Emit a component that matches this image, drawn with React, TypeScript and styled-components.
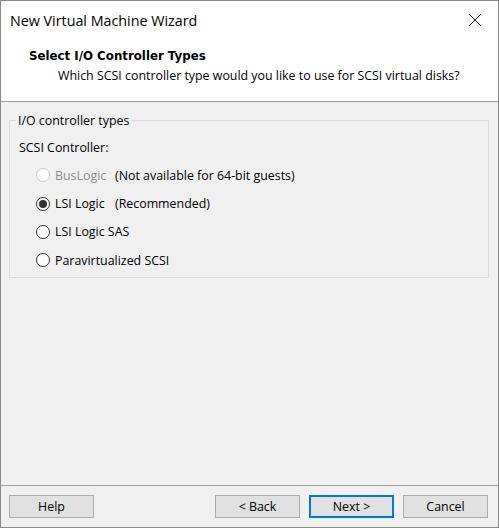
import React from "react";
import styled, { createGlobalStyle } from "styled-components";

const Global = createGlobalStyle`
  html, body { margin: 0; padding: 0; background: #f0f0f0; }
  body { font-family: "Open Sans", "Noto Sans", sans-serif; }
`;

const Window = styled.div`
  box-sizing: border-box;
  width: 499px;
  height: 528px;
  border: 1px solid #8a8a8a;
  background: #f0f0f0;
  display: flex;
  flex-direction: column;
  font-family: "Open Sans", "Noto Sans", sans-serif;
  font-size: 12.4px;
  color: #000;
`;

const Top = styled.div`
  background: #fff;
  border-bottom: 1px solid #a0a0a0;
  height: 101px;
  box-sizing: border-box;
  display: flex;
  flex-direction: column;
`;

const TitleBar = styled.div`
  height: 38px;
  display: flex;
  align-items: center;
  justify-content: space-between;
  padding-left: 9px;
`;

const TitleText = styled.div`
  font-size: 14.3px;
  color: #000;
`;

const CloseBtn = styled.div`
  width: 46px;
  height: 38px;
  display: flex;
  align-items: center;
  justify-content: center;
`;

const HeaderTitle = styled.div`
  font-family: "DejaVu Sans", sans-serif;
  font-weight: bold;
  font-size: 11.8px;
  padding-left: 28px;
  margin-top: 10px;
`;

const HeaderSub = styled.div`
  padding-left: 57px;
  margin-top: 4px;
`;

const Body = styled.div`
  flex: 1;
  padding: 10px 9px 0 8px;
  border-bottom: 1px solid #a0a0a0;
`;

const Group = styled.fieldset`
  margin: 0;
  border: 1px solid #dcdcdc;
  padding: 0 0 2px 0;
  box-sizing: border-box;
`;

const Legend = styled.legend`
  padding: 0 2px;
  margin-left: 6px;
`;

const GroupContent = styled.div`
  padding-left: 9px;
`;

const Label = styled.div`
  margin-top: 10px;
  margin-bottom: 5px;
`;

const RadioRow = styled.div<{ $disabled?: boolean }>`
  display: flex;
  align-items: center;
  height: 28.4px;
  padding-left: 17px;
  color: ${(p) => (p.$disabled ? "#8d8d8d" : "#000")};
`;

const Circle = styled.span<{ $checked?: boolean; $disabled?: boolean }>`
  width: 14px;
  height: 14px;
  box-sizing: border-box;
  border-radius: 50%;
  border: 1px solid ${(p) => (p.$disabled ? "#cccccc" : "#333")};
  background: #fff;
  display: flex;
  align-items: center;
  justify-content: center;
  margin-right: 5px;
  &::after {
    content: "";
    display: ${(p) => (p.$checked ? "block" : "none")};
    width: 8px;
    height: 8px;
    border-radius: 50%;
    background: #333;
  }
`;

const RadioLabel = styled.span`
  width: 60px;
`;

const Note = styled.span`
  color: #000;
`;

const Footer = styled.div`
  height: 41px;
  display: flex;
  align-items: center;
  padding: 0 10px 0 8px;
  gap: 9px;
`;

const Spacer = styled.div`
  flex: 1;
`;

const Button = styled.button<{ $primary?: boolean }>`
  width: 85px;
  height: 23px;
  box-sizing: border-box;
  background: #e1e1e1;
  border: ${(p) => (p.$primary ? "2px solid #0078d7" : "1px solid #adadad")};
  font-family: "Open Sans", "Noto Sans", sans-serif;
  font-size: 12.4px;
  color: #000;
  padding: 0;
`;

const options = [
  { label: "BusLogic", note: "(Not available for 64-bit guests)", disabled: true },
  { label: "LSI Logic", note: "(Recommended)", checked: true },
  { label: "LSI Logic SAS" },
  { label: "Paravirtualized SCSI" },
];

export default function App() {
  return (
    <>
      <Global />
      <Window>
        <Top>
          <TitleBar>
            <TitleText>New Virtual Machine Wizard</TitleText>
            <CloseBtn>
              <svg width="14" height="14" viewBox="0 0 14 14">
                <path d="M1 1 L13 13 M13 1 L1 13" stroke="#111" strokeWidth="1" />
              </svg>
            </CloseBtn>
          </TitleBar>
          <HeaderTitle>Select I/O Controller Types</HeaderTitle>
          <HeaderSub>Which SCSI controller type would you like to use for SCSI virtual disks?</HeaderSub>
        </Top>
        <Body>
          <Group>
            <Legend>I/O controller types</Legend>
            <GroupContent>
              <Label>SCSI Controller:</Label>
              {options.map((o) => (
                <RadioRow key={o.label} $disabled={o.disabled}>
                  <Circle $checked={o.checked} $disabled={o.disabled} />
                  {o.note ? (
                    <>
                      <RadioLabel>{o.label}</RadioLabel>
                      <Note>{o.note}</Note>
                    </>
                  ) : (
                    <span>{o.label}</span>
                  )}
                </RadioRow>
              ))}
            </GroupContent>
          </Group>
        </Body>
        <Footer>
          <Button>Help</Button>
          <Spacer />
          <Button>&lt; Back</Button>
          <Button $primary>Next &gt;</Button>
          <Button>Cancel</Button>
        </Footer>
      </Window>
    </>
  );
}
